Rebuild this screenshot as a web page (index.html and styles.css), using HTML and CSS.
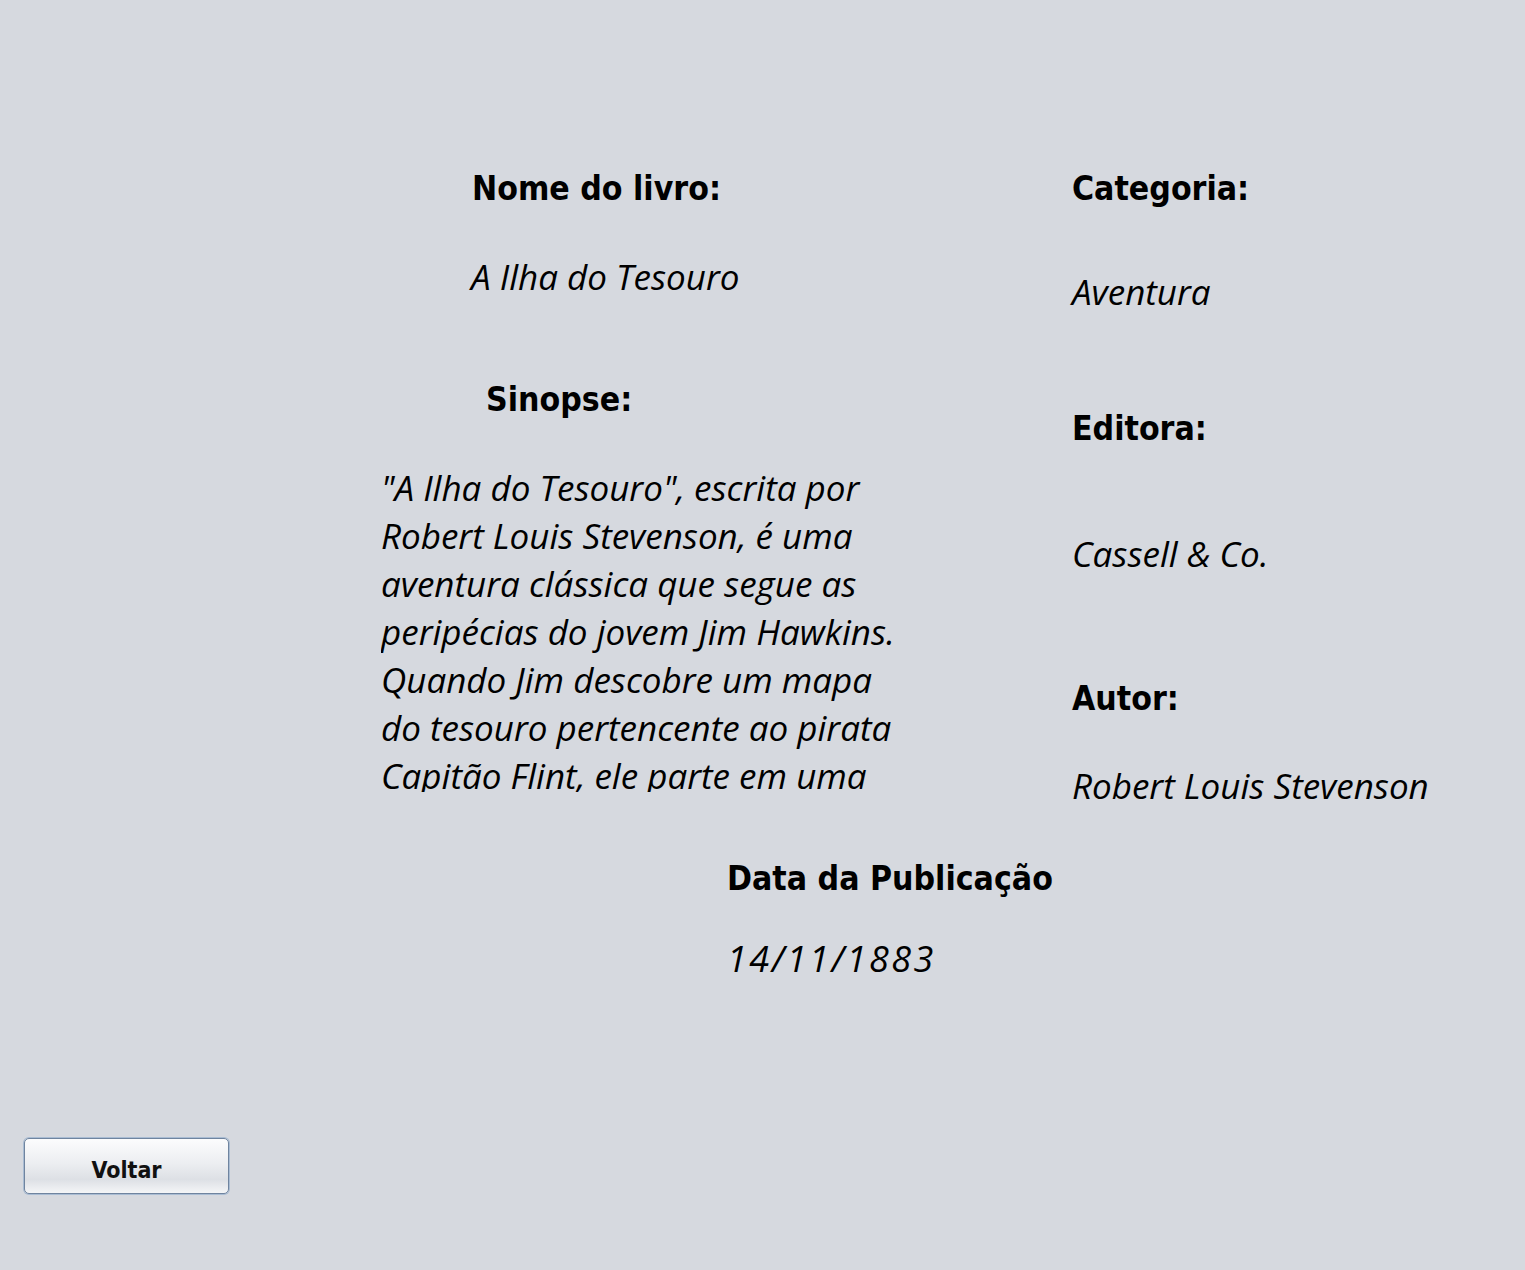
FILE: index.html
```html
<!DOCTYPE html>
<html lang="pt">
<head>
<meta charset="utf-8">
<title>Detalhes do livro</title>
<link rel="stylesheet" href="styles.css">
</head>
<body>
<div class="window">
  <div class="form">
    <div class="col-left">
      <div class="label l-nome">Nome do livro:</div>
      <div class="value v-nome">A Ilha do Tesouro</div>
      <div class="label l-sinopse">Sinopse:</div>
      <div class="synopsis">
        <p>"A Ilha do Tesouro", escrita por<br>Robert Louis Stevenson, é uma<br>aventura clássica que segue as<br>peripécias do jovem Jim Hawkins.<br>Quando Jim descobre um mapa<br>do tesouro pertencente ao pirata<br>Capitão Flint, ele parte em uma</p>
      </div>
    </div>
    <div class="col-right">
      <div class="label">Categoria:</div>
      <div class="value v-categoria">Aventura</div>
      <div class="label l-editora">Editora:</div>
      <div class="value v-editora">Cassell &amp; Co.</div>
      <div class="label l-autor">Autor:</div>
      <div class="value v-autor">Robert Louis Stevenson</div>
    </div>
  </div>
  <div class="date-block">
    <div class="label">Data da Publicação</div>
    <div class="value date-value">14/11/1883</div>
  </div>
  <div class="footer">
    <button class="btn" type="button">Voltar</button>
  </div>
</div>
</body>
</html>
```

FILE: styles.css
```css
html, body {
  margin: 0;
  padding: 0;
  background: #d6d9df;
}

.window {
  height: 1270px;
  display: flex;
  flex-direction: column;
  background: #d6d9df;
  color: #000;
  overflow: hidden;
}

.label {
  box-sizing: border-box;
  padding-top: 1px;
  font-family: "DejaVu Sans Condensed", "DejaVu Sans", sans-serif;
  font-stretch: condensed;
  font-weight: bold;
  font-size: 33.5px;
  line-height: 40px;
  height: 40px;
  white-space: nowrap;
}

.value {
  font-family: "Open Sans", "Noto Sans", sans-serif;
  font-style: italic;
  font-size: 35px;
  line-height: 40px;
  height: 40px;
  white-space: nowrap;
}

.form {
  display: flex;
  padding-top: 168px;
  padding-left: 381px;
}

.col-left {
  width: 691px;
  display: flex;
  flex-direction: column;
}

.col-right {
  display: flex;
  flex-direction: column;
}

.l-nome { margin-left: 91px; }
.v-nome { margin-left: 90px; margin-top: 49px; }
.l-sinopse { margin-left: 105px; margin-top: 82px; }

.synopsis {
  margin-top: 45px;
  width: 580px;
  height: 328px;
  overflow: hidden;
}

.synopsis p {
  margin: 0;
  font-family: "Open Sans", "Noto Sans", sans-serif;
  font-style: italic;
  font-size: 35px;
  line-height: 48px;
  white-space: nowrap;
}

.v-categoria { margin-top: 64px; }
.l-editora { margin-top: 96px; }
.v-editora { margin-top: 86px; }
.l-autor { margin-top: 104px; }
.v-autor { margin-top: 48px; }

.date-block {
  margin-left: 727px;
  margin-top: 52px;
  display: flex;
  flex-direction: column;
}

.date-value {
  margin-top: 36px;
  font-size: 36px;
  letter-spacing: 2.5px;
  line-height: 50px;
  height: 50px;
}

.footer {
  margin-top: auto;
  padding: 0 0 76px 24px;
}

.btn {
  width: 205px;
  height: 56px;
  margin: 0;
  padding: 7px 0 0;
  border: 1px solid #6f849f;
  border-radius: 5px;
  box-shadow: 0 0 0 1px #a9bcd3;
  background: linear-gradient(to bottom, #fcfcfd 0%, #eceef1 45%, #dde0e5 75%, #f4f5f7 100%);
  font-family: "DejaVu Sans Condensed", "DejaVu Sans", sans-serif;
  font-stretch: condensed;
  font-weight: bold;
  font-size: 23px;
  color: #111;
  cursor: pointer;
}
```
